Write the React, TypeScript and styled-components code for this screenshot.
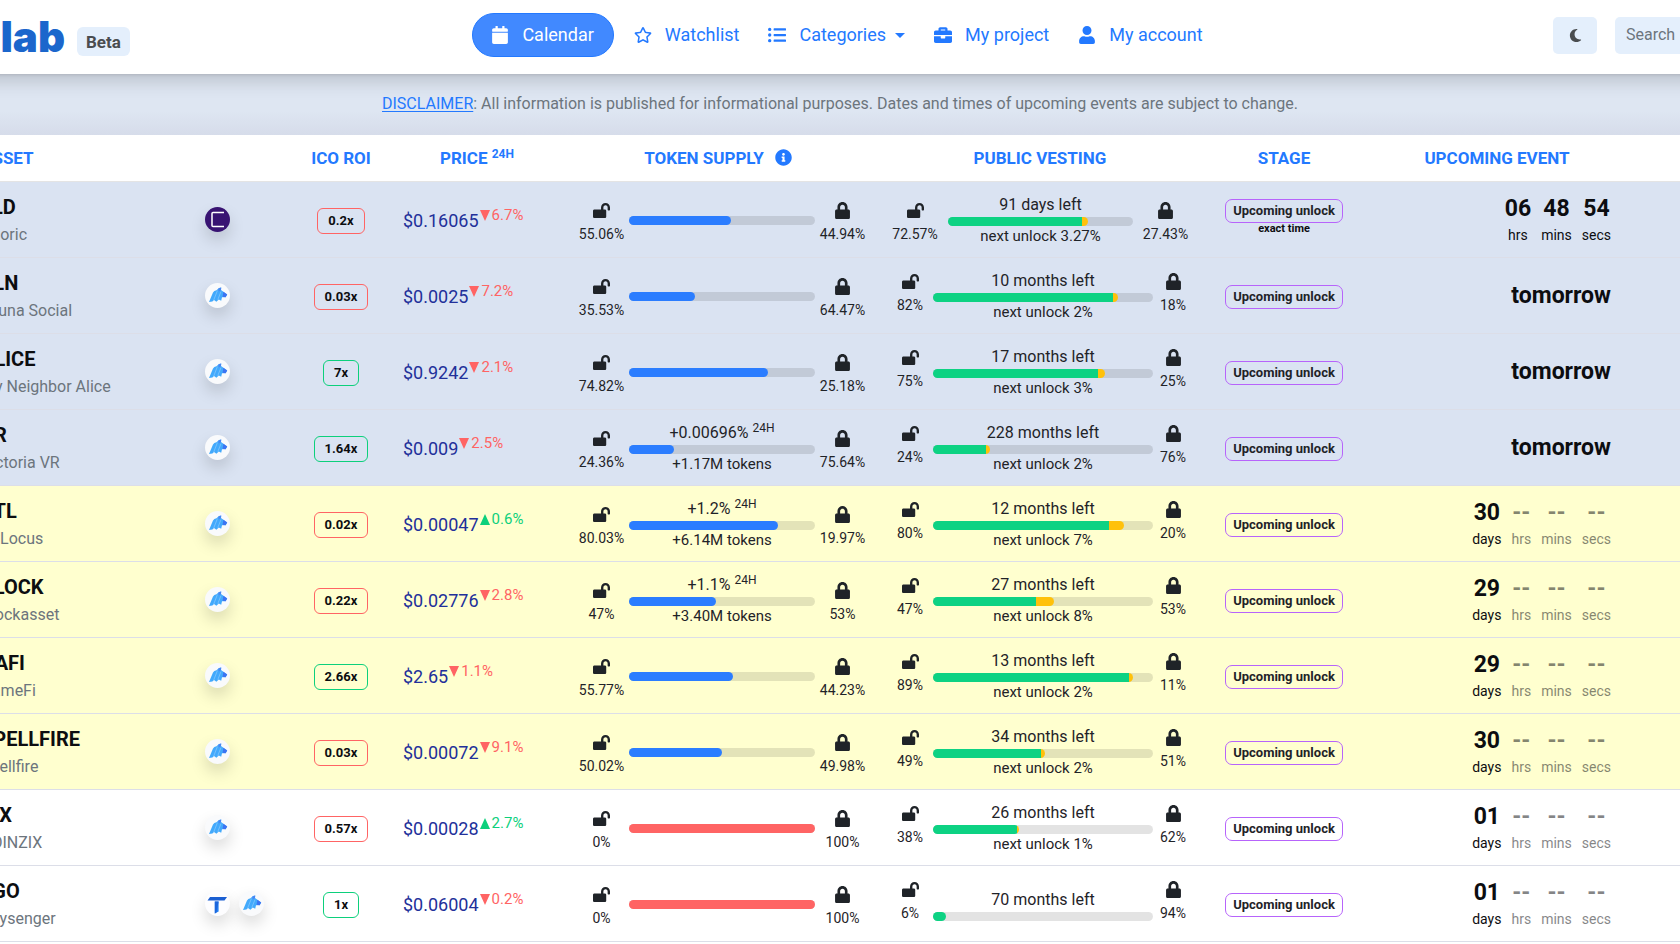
import React from 'react';
import styled, { createGlobalStyle, css } from 'styled-components';
import {
  FaBriefcase,
  FaCalendar,
  FaInfoCircle,
  FaListUl,
  FaLock,
  FaLockOpen,
  FaRegStar,
  FaUser,
} from 'react-icons/fa';
import { FaMoon } from 'react-icons/fa6';

const color = {
  link: '#2379ff',
  pill: '#4189ff',
  soft: '#e4effc',
  text: '#1f2328',
  strong: '#0c0d10',
  muted: '#6c757d',
  price: '#22309a',
  down: '#ff6464',
  up: '#0cd07c',
  supply: '#2b7dff',
  vested: '#0dd283',
  next: '#ffc10a',
  stage: '#b764fb',
  line: '#dcdee8',
};

const GlobalStyle = createGlobalStyle`
  *, *::before, *::after { box-sizing: border-box; }
  body {
    margin: 0;
    background: #fff;
    color: ${color.text};
    font-family: Roboto, "Liberation Sans", sans-serif;
    font-size: 16px;
    line-height: 24px;
  }
  button, input { font: inherit; }
`;

const Page = styled.div`
  overflow: hidden;
`;

/* ---------- top bar ---------- */

const TopBar = styled.header`
  position: relative;
  z-index: 1;
  display: grid;
  grid-template-columns: 1fr auto 1fr;
  align-items: center;
  height: 74px;
  margin: 0 -24px;
  padding: 0 24px;
  background: #fff;
  box-shadow: 0 8px 16px rgba(0, 0, 0, 0.15), 0 1px 3px rgba(0, 0, 0, 0.1);
`;

const Brand = styled.div`
  display: flex;
  align-items: center;
  gap: 12px;
`;

const Logo = styled.a`
  display: flex;
  justify-content: flex-end;
  width: 65px;
  color: #1b66cc;
  font-family: Inter, sans-serif;
  font-size: 42px;
  font-weight: 900;
  line-height: 44px;
  text-decoration: none;
`;

const Tag = styled.span`
  margin-top: 9px;
  padding: 3px 9px 2px;
  border-radius: 6px;
  background: ${color.soft};
  color: #4a4d50;
  font-size: 17px;
  font-weight: 700;
`;

const Nav = styled.nav`
  display: flex;
  align-items: center;
  gap: 2px;
  margin: 0 0 4px 8px;
`;

const navItem = css`
  display: flex;
  align-items: center;
  gap: 12px;
  height: 44px;
  padding: 0 13px;
  border: 0;
  background: none;
  color: ${color.link};
  font-size: 18px;
  text-decoration: none;
  white-space: nowrap;
`;

const NavLink = styled.a<{ $active?: boolean }>`
  ${navItem}
  ${({ $active }) =>
    $active &&
    css`
      margin-right: 4px;
      padding: 0 19px 0 17px;
      border: 1px solid ${color.link};
      border-radius: 22px;
      background: ${color.pill};
      color: #fff;
    `}
`;

const NavButton = styled.button`
  ${navItem}
`;

const NavIcon = styled.span`
  display: flex;
  justify-content: center;
  width: 20px;
  svg {
    height: 18px;
    width: auto;
  }
`;

const Caret = styled.span`
  margin-left: -3px;
  border: 5px solid transparent;
  border-top-color: currentColor;
  border-bottom: 0;
`;

const Tools = styled.div`
  display: flex;
  justify-content: flex-end;
  gap: 18px;
  margin: 0 -135px 3px 0;
`;

const ThemeButton = styled.button`
  display: grid;
  place-items: center;
  width: 44px;
  height: 37px;
  border: 0;
  border-radius: 5px;
  background: ${color.soft};
  color: #4a4d50;
  svg {
    height: 15px;
    width: auto;
  }
`;

const SearchBox = styled.input`
  width: 200px;
  height: 37px;
  padding: 0 11px 2px;
  border: 0;
  border-radius: 5px;
  background: ${color.soft};
  &::placeholder {
    color: ${color.muted};
    opacity: 1;
  }
`;

/* ---------- notice ---------- */

const Notice = styled.p`
  margin: 0;
  padding: 18px 16px 19px;
  background: linear-gradient(#dee6f2 60%, #d6dcea);
  color: ${color.muted};
  text-align: center;
  a {
    color: ${color.link};
    text-underline-offset: 2px;
  }
`;

/* ---------- table ---------- */

const Table = styled.table`
  width: calc(100% + 56px);
  margin-left: -28px;
  border-collapse: separate;
  border-spacing: 0;
  table-layout: fixed;
  background: #fff;
`;

const Col = styled.col<{ $w: number }>`
  width: ${({ $w }) => $w}px;
`;

const Head = styled.th<{ $left?: boolean }>`
  height: 47px;
  padding: 0 0 0 ${({ $left }) => ($left ? 9 : 0)}px;
  border-bottom: 1px solid #e4e4e4;
  color: ${color.link};
  font-size: 17px;
  font-weight: 700;
  text-align: ${({ $left }) => ($left ? 'left' : 'center')};
  white-space: nowrap;
  svg {
    margin: 0 8px 0 11px;
    vertical-align: -2px;
  }
`;

const Sup = styled.sup`
  font-size: 12px;
  line-height: 1;
  vertical-align: 6px;
`;

type Tone = 'soon' | 'month' | 'plain';
const toneFill: Record<Tone, string> = { soon: '#dae3f2', month: '#ffffcf', plain: '#fff' };

const Row = styled.tr<{ $tone: Tone }>`
  background: ${({ $tone }) => toneFill[$tone]};
`;

const Cell = styled.td<{ $pad?: string; $align?: string }>`
  height: 76px;
  padding: ${({ $pad }) => $pad || '2px 0 0'};
  border-bottom: 1px solid ${color.line};
  text-align: ${({ $align }) => $align || 'center'};
  vertical-align: middle;
  white-space: nowrap;
`;

const Ticker = styled.div`
  color: ${color.strong};
  font-size: 20px;
  font-weight: 700;
  line-height: 30px;
`;

const Project = styled.div`
  color: ${color.muted};
  line-height: 26px;
`;

const Launchpads = styled.div`
  display: flex;
  gap: 9px;
`;

const Coin = styled.span<{ $fill: string }>`
  width: 25px;
  height: 25px;
  border-radius: 50%;
  background: ${({ $fill }) => $fill};
  box-shadow: 0 8px 16px rgba(0, 0, 0, 0.15);
  svg {
    display: block;
  }
`;

const Roi = styled.span<{ $up: boolean }>`
  display: inline-block;
  padding: 0 10px;
  border: 1px solid ${({ $up }) => ($up ? color.up : color.down)};
  border-radius: 6px;
  color: ${color.strong};
  font-size: 13px;
  font-weight: 700;
  line-height: 24px;
`;

const Price = styled.div`
  display: flex;
  align-items: center;
  color: ${color.price};
  font-size: 18px;
`;

const Change = styled.span<{ $up: boolean }>`
  display: flex;
  align-items: center;
  gap: 2px;
  margin: 0 0 11px 1px;
  color: ${({ $up }) => ($up ? color.up : color.down)};
  font-size: 15px;
`;

const Meter = styled.div<{ $kind: 'supply' | 'wide' | 'narrow' }>`
  display: grid;
  align-items: center;
  ${({ $kind }) =>
    ({
      supply: 'grid-template-columns: 47px 1fr 47px; gap: 4px;',
      wide: 'grid-template-columns: 50px 1fr 49px; gap: 8px;',
      narrow: 'grid-template-columns: 40px 1fr 34px; gap: 3px;',
    })[$kind]}
`;

const Share = styled.div<{ $raised?: boolean }>`
  display: flex;
  flex-direction: column;
  align-items: center;
  gap: 4px;
  padding-${({ $raised }) => ($raised ? 'bottom' : 'top')}: ${({ $raised }) => ($raised ? 3 : 6)}px;
  font-size: 14px;
  line-height: 22px;
  svg {
    height: 17px;
    width: auto;
  }
`;

const Line = styled.div`
  line-height: 24px;
`;

const SubLine = styled.div`
  font-size: 15px;
  line-height: 21px;
`;

const Track = styled.div`
  height: 9px;
  border-radius: 5px;
  background: rgba(0, 0, 0, 0.11);
`;

const Fill = styled.div`
  display: flex;
  height: 9px;
  border-radius: 5px;
  overflow: hidden;
`;

const Part = styled.div<{ $fill: string }>`
  flex-basis: 0;
  background: ${({ $fill }) => $fill};
`;

const Stage = styled.span`
  display: inline-block;
  padding: 0 7px;
  border: 1px solid ${color.stage};
  border-radius: 7px;
  color: ${color.text};
  font-size: 13px;
  font-weight: 700;
  line-height: 22px;
`;

const StageNote = styled.div`
  padding-bottom: 8px;
  color: ${color.strong};
  font-size: 11px;
  font-weight: 700;
  line-height: 12px;
`;

const Countdown = styled.div`
  display: flex;
  justify-content: flex-end;
  gap: 10px;
  padding-top: 3px;
`;

const Unit = styled.div<{ $off: boolean }>`
  color: ${color.strong};
  opacity: ${({ $off }) => ($off ? 0.5 : 1)};
  font-size: 14px;
  line-height: 25px;
  text-align: center;
`;

const Big = styled.div`
  color: ${color.strong};
  font-size: 23px;
  font-weight: 700;
  line-height: 28px;
`;

/* ---------- launchpad marks ---------- */

type Pad = 'dao' | 'trust' | 'list';

const marks: Record<Pad, { fill: string; label: string; art: React.ReactNode }> = {
  dao: {
    fill: '#f9fafc',
    label: 'DAO Maker',
    art: (
      <>
        <path
          d="M4 19 L8 9.5 Q9 7.5 11.5 7.2 L14 5 L16.2 4.4 L16 7 L22.2 11.4 L20.6 14.2 L17 14.2 L16.2 17.8 L13.8 16.4 L11.4 18.8 L9 17 L7.4 18.6 Z"
          fill="#42a9fc"
        />
        <path d="M13.4 5.6 L16.2 4.4 L16 7 L13.8 8.6 Z" fill="#4a86f4" />
        <path d="M18.4 8.8 L22.2 11.4 L20.6 14.2 L17.6 13.8 Z" fill="#3d74f2" />
        <path
          d="M8.6 17.4 L12.4 7.6 M12.8 16.6 L16 8.6"
          stroke="#a9d6fc"
          strokeWidth="0.5"
          fill="none"
        />
      </>
    ),
  },
  trust: {
    fill: '#fdfdff',
    label: 'TrustPad',
    art: (
      <>
        <path d="M2.5 9.5 L5 6 H22 L19.5 9.5 Z" fill="#1b5fd2" />
        <path d="M9.8 10.5 H13.6 V20.5 L9.8 22.5 Z" fill="#2380f2" />
        <path d="M9.8 10.5 L13.6 10.5 L11.4 21.6 L9.8 22.5 Z" fill="#1b66dc" />
      </>
    ),
  },
  list: {
    fill: '#381372',
    label: 'CoinList',
    art: (
      <path
        d="M19 5.6 H8 Q7 5.6 7 6.6 V18.6 Q7 19.6 8 19.6 H19"
        fill="none"
        stroke="#fff"
        strokeWidth="1.5"
      />
    ),
  },
};

const PadMark = ({ pad }: { pad: Pad }) => (
  <Coin $fill={marks[pad].fill}>
    <svg width="25" height="25" viewBox="0 0 25 25" role="img" aria-label={marks[pad].label}>
      {marks[pad].art}
    </svg>
  </Coin>
);

const Arrow = ({ up }: { up: boolean }) => (
  <svg width="10" height="11" viewBox="0 0 10 11" aria-hidden="true">
    <path d={up ? 'M5 0 L10 11 H0 Z' : 'M0 0 H10 L5 11 Z'} fill="currentColor" />
  </svg>
);

/* ---------- data ---------- */

type Asset = {
  ticker: string;
  name: string;
  pads: Pad[];
  roi: string;
  gain?: boolean;
  price: string;
  change: string;
  rising?: boolean;
  supply: [string, string];
  emission?: [string, string];
  vesting: [string, string];
  left: string;
  unlock?: number;
  note?: string;
  event: string | [string, string][];
  tone: Tone;
};

const daysOnly = (days: string): [string, string][] => [
  [days, 'days'],
  ['--', 'hrs'],
  ['--', 'mins'],
  ['--', 'secs'],
];

const assets: Asset[] = [
  { ticker: 'FLD', name: 'Choric', pads: ['list'], roi: '0.2x', price: '$0.16065', change: '6.7%', supply: ['55.06%', '44.94%'], vesting: ['72.57%', '27.43%'], left: '91 days left', unlock: 3.27, note: 'exact time', event: [['06', 'hrs'], ['48', 'mins'], ['54', 'secs']], tone: 'soon' },
  { ticker: 'SLN', name: 'Fauna Social', pads: ['dao'], roi: '0.03x', price: '$0.0025', change: '7.2%', supply: ['35.53%', '64.47%'], vesting: ['82%', '18%'], left: '10 months left', unlock: 2, event: 'tomorrow', tone: 'soon' },
  { ticker: 'ALICE', name: 'My Neighbor Alice', pads: ['dao'], roi: '7x', gain: true, price: '$0.9242', change: '2.1%', supply: ['74.82%', '25.18%'], vesting: ['75%', '25%'], left: '17 months left', unlock: 3, event: 'tomorrow', tone: 'soon' },
  { ticker: 'VR', name: 'Victoria VR', pads: ['dao'], roi: '1.64x', gain: true, price: '$0.009', change: '2.5%', supply: ['24.36%', '75.64%'], emission: ['+0.00696%', '+1.17M tokens'], vesting: ['24%', '76%'], left: '228 months left', unlock: 2, event: 'tomorrow', tone: 'soon' },
  { ticker: 'BTL', name: 'BitLocus', pads: ['dao'], roi: '0.02x', price: '$0.00047', change: '0.6%', rising: true, supply: ['80.03%', '19.97%'], emission: ['+1.2%', '+6.14M tokens'], vesting: ['80%', '20%'], left: '12 months left', unlock: 7, event: daysOnly('30'), tone: 'month' },
  { ticker: 'BLOCK', name: 'Blockasset', pads: ['dao'], roi: '0.22x', price: '$0.02776', change: '2.8%', supply: ['47%', '53%'], emission: ['+1.1%', '+3.40M tokens'], vesting: ['47%', '53%'], left: '27 months left', unlock: 8, event: daysOnly('29'), tone: 'month' },
  { ticker: 'GAFI', name: 'GameFi', pads: ['dao'], roi: '2.66x', gain: true, price: '$2.65', change: '1.1%', supply: ['55.77%', '44.23%'], vesting: ['89%', '11%'], left: '13 months left', unlock: 2, event: daysOnly('29'), tone: 'month' },
  { ticker: 'SPELLFIRE', name: 'Spellfire', pads: ['dao'], roi: '0.03x', price: '$0.00072', change: '9.1%', supply: ['50.02%', '49.98%'], vesting: ['49%', '51%'], left: '34 months left', unlock: 2, event: daysOnly('30'), tone: 'month' },
  { ticker: 'ZIX', name: 'COINZIX', pads: ['dao'], roi: '0.57x', price: '$0.00028', change: '2.7%', rising: true, supply: ['0%', '100%'], vesting: ['38%', '62%'], left: '26 months left', unlock: 1, event: daysOnly('01'), tone: 'plain' },
  { ticker: 'EGO', name: 'Paysenger', pads: ['trust', 'dao'], roi: '1x', gain: true, price: '$0.06004', change: '0.2%', supply: ['0%', '100%'], vesting: ['6%', '94%'], left: '70 months left', event: daysOnly('01'), tone: 'plain' },
];

/* ---------- pieces ---------- */

const Bar = ({ parts }: { parts: { value: number; fill: string }[] }) => {
  const total = parts.reduce((sum, part) => sum + part.value, 0);
  return (
    <Track>
      <Fill style={{ width: `${total}%` }}>
        {parts.map((part) => (
          <Part key={part.fill} $fill={part.fill} style={{ flexGrow: part.value }} />
        ))}
      </Fill>
    </Track>
  );
};

const SupplyMeter = ({ asset }: { asset: Asset }) => {
  const unlocked = parseFloat(asset.supply[0]);
  return (
    <Meter $kind="supply">
      <Share>
        <FaLockOpen />
        {asset.supply[0]}
      </Share>
      <div>
        {asset.emission && (
          <Line>
            {asset.emission[0]} <Sup>24H</Sup>
          </Line>
        )}
        <Bar
          parts={[
            unlocked > 0
              ? { value: unlocked, fill: color.supply }
              : { value: 100, fill: color.down },
          ]}
        />
        {asset.emission && <SubLine>{asset.emission[1]}</SubLine>}
      </div>
      <Share>
        <FaLock />
        {asset.supply[1]}
      </Share>
    </Meter>
  );
};

const VestingMeter = ({ asset }: { asset: Asset }) => {
  const wide = asset.vesting[0].includes('.');
  const parts = [{ value: parseFloat(asset.vesting[0]), fill: color.vested }];
  if (asset.unlock) parts.push({ value: asset.unlock, fill: color.next });
  return (
    <Meter $kind={wide ? 'wide' : 'narrow'}>
      <Share $raised={!wide}>
        <FaLockOpen />
        {asset.vesting[0]}
      </Share>
      <div>
        <Line>{asset.left}</Line>
        <Bar parts={parts} />
        {asset.unlock && <SubLine>next unlock {asset.unlock}%</SubLine>}
      </div>
      <Share $raised={!wide}>
        <FaLock />
        {asset.vesting[1]}
      </Share>
    </Meter>
  );
};

const AssetRow = ({ asset }: { asset: Asset }) => (
  <Row $tone={asset.tone}>
    <Cell $pad="0 0 0 9px" $align="left">
      <Ticker>{asset.ticker}</Ticker>
      <Project>{asset.name}</Project>
    </Cell>
    <Cell $pad="0 0 0 8px">
      <Launchpads>
        {asset.pads.map((pad) => (
          <PadMark key={pad} pad={pad} />
        ))}
      </Launchpads>
    </Cell>
    <Cell>
      <Roi $up={!!asset.gain}>{asset.roi}</Roi>
    </Cell>
    <Cell $pad="2px 0 0 16px" $align="left">
      <Price>
        {asset.price}
        <Change $up={!!asset.rising}>
          <Arrow up={!!asset.rising} />
          {asset.change}
        </Change>
      </Price>
    </Cell>
    <Cell $pad="1px 11px 0">
      <SupplyMeter asset={asset} />
    </Cell>
    <Cell $pad="1px 13px 0">
      <VestingMeter asset={asset} />
    </Cell>
    <Cell>
      <Stage>Upcoming unlock</Stage>
      {asset.note && <StageNote>{asset.note}</StageNote>}
    </Cell>
    <Cell $pad="1px 18px 0 0" $align="right">
      {typeof asset.event === 'string' ? (
        <Big>{asset.event}</Big>
      ) : (
        <Countdown>
          {asset.event.map(([value, label]) => (
            <Unit key={label} $off={value === '--'}>
              <Big>{value}</Big>
              {label}
            </Unit>
          ))}
        </Countdown>
      )}
    </Cell>
    <Cell />
  </Row>
);

export default function App() {
  return (
    <Page>
      <GlobalStyle />
      <TopBar>
        <Brand>
          <Logo href="#">lab</Logo>
          <Tag>Beta</Tag>
        </Brand>
        <Nav>
          <NavLink href="#calendar" $active>
            <NavIcon><FaCalendar /></NavIcon>
            Calendar
          </NavLink>
          <NavLink href="#watchlist">
            <NavIcon><FaRegStar /></NavIcon>
            Watchlist
          </NavLink>
          <NavButton type="button">
            <NavIcon><FaListUl /></NavIcon>
            Categories
            <Caret />
          </NavButton>
          <NavLink href="#project">
            <NavIcon><FaBriefcase /></NavIcon>
            My project
          </NavLink>
          <NavLink href="#account">
            <NavIcon><FaUser /></NavIcon>
            My account
          </NavLink>
        </Nav>
        <Tools>
          <ThemeButton type="button" aria-label="Dark theme">
            <FaMoon />
          </ThemeButton>
          <SearchBox type="search" placeholder="Search" aria-label="Search" />
        </Tools>
      </TopBar>
      <Notice>
        <a href="#disclaimer">DISCLAIMER</a>: All information is published for informational
        purposes. Dates and times of upcoming events are subject to change.
      </Notice>
      <Table>
        <colgroup>
          {[225, 98, 92, 180, 310, 326, 162, 264, 79].map((w, i) => (
            <Col key={i} $w={w} />
          ))}
        </colgroup>
        <thead>
          <tr>
            <Head $left colSpan={2}>ASSET</Head>
            <Head>ICO ROI</Head>
            <Head>
              PRICE <Sup>24H</Sup>
            </Head>
            <Head>
              TOKEN SUPPLY
              <FaInfoCircle size={17} />
            </Head>
            <Head>PUBLIC VESTING</Head>
            <Head>STAGE</Head>
            <Head>UPCOMING EVENT</Head>
            <Head />
          </tr>
        </thead>
        <tbody>
          {assets.map((asset) => (
            <AssetRow key={asset.ticker} asset={asset} />
          ))}
        </tbody>
      </Table>
    </Page>
  );
}
